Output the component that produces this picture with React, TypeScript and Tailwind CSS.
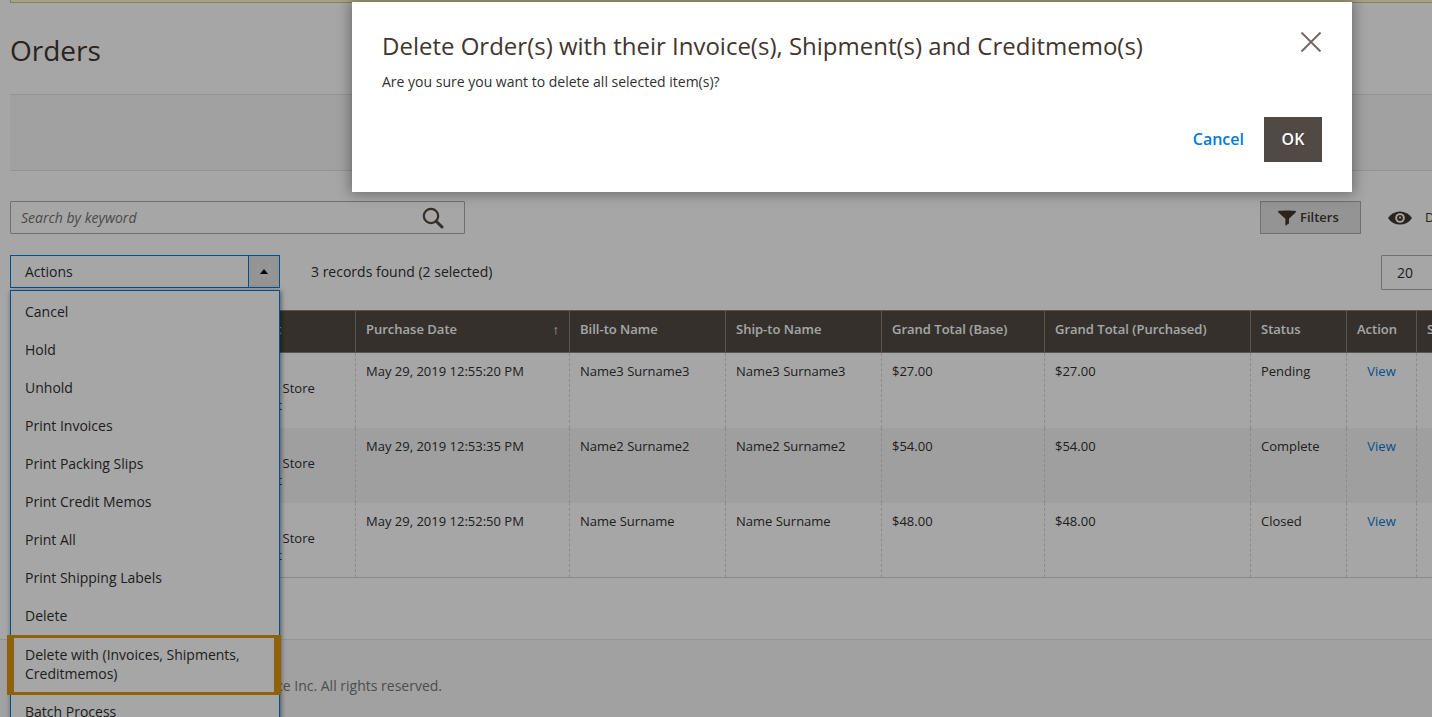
import React from "react";

const menuItems = [
  "Cancel",
  "Hold",
  "Unhold",
  "Print Invoices",
  "Print Packing Slips",
  "Print Credit Memos",
  "Print All",
  "Print Shipping Labels",
  "Delete",
  "Delete with (Invoices, Shipments, Creditmemos)",
  "Batch Process",
];

const highlighted = "Delete with (Invoices, Shipments, Creditmemos)";

const orders = [
  { id: "000000003", date: "May 29, 2019 12:55:20 PM", name: "Name3 Surname3", total: "$27.00", status: "Pending" },
  { id: "000000002", date: "May 29, 2019 12:53:35 PM", name: "Name2 Surname2", total: "$54.00", status: "Complete" },
  { id: "000000001", date: "May 29, 2019 12:52:50 PM", name: "Name Surname", total: "$48.00", status: "Closed" },
];

function SearchIcon() {
  return (
    <svg width="22" height="22" viewBox="0 0 22 22" fill="none" stroke="#514943" aria-hidden="true">
      <circle cx="9" cy="9" r="7.2" strokeWidth="2.2" />
      <path d="M14.2 14.2L20 20" strokeWidth="3" strokeLinecap="round" />
    </svg>
  );
}

function FunnelIcon() {
  return (
    <svg width="18" height="16" viewBox="0 0 18 16" fill="#41362f" aria-hidden="true">
      <path d="M0 1C5 0.3 13 0.3 18 1L17.6 2.4L11 8.8V13.4L7.4 15.8V8.8L0.4 2.4Z" />
    </svg>
  );
}

function EyeIcon() {
  return (
    <svg width="24" height="14" viewBox="0 0 24 14" aria-hidden="true">
      <path d="M0 7C3 2.6 7 0.4 12 0.4S21 2.6 24 7C21 11.4 17 13.6 12 13.6S3 11.4 0 7Z" fill="#41362f" />
      <circle cx="12" cy="7" r="4.8" fill="#fff" />
      <circle cx="12" cy="7" r="2.9" fill="#41362f" />
      <circle cx="12" cy="6.5" r="1.1" fill="#fff" />
    </svg>
  );
}

function ActionsMenu() {
  return (
    <div className="relative z-10 w-[270px] shrink-0">
      <button
        type="button"
        aria-expanded="true"
        aria-haspopup="menu"
        className="flex h-[33px] w-full items-stretch border border-[#007bdb] bg-white text-left"
      >
        <span className="flex flex-1 items-center pl-3.5">Actions</span>
        <span className="flex w-[31px] items-center justify-center border-l border-[#007bdb] bg-[#e3e3e3]">
          <svg width="8" height="5" viewBox="0 0 8 5" aria-hidden="true">
            <path d="M4 0L8 5H0Z" fill="#000" />
          </svg>
        </span>
      </button>
      <ul
        role="menu"
        className="absolute top-full left-0 mt-0.5 w-full border border-[#007bdb] bg-white pt-px shadow-[1px_1px_5px_rgba(0,0,0,0.5)]"
      >
        {menuItems.map((item) =>
          item === highlighted ? (
            <li key={item} role="none" className="mt-px -mr-0.5 -mb-[3px] -ml-1 border-x-[7px] border-y-[3px] border-[#db9711]">
              <button type="button" role="menuitem" className="block w-full pt-[7px] pr-6 pb-[9px] pl-[11px] text-left">
                {item}
              </button>
            </li>
          ) : (
            <li key={item} role="none">
              <button type="button" role="menuitem" className="flex h-[38px] w-full items-center px-3.5 text-left">
                {item}
              </button>
            </li>
          ),
        )}
      </ul>
    </div>
  );
}

const th = "border border-[#8a837f] px-2.5 pt-2.5 text-left align-top font-semibold whitespace-nowrap text-white";
const td = "border-x border-dashed border-[#d6d6d6] px-2.5 pt-2.5 align-top";

function OrdersTable() {
  return (
    <table className="w-[1506px] table-fixed border-collapse text-[13px] leading-[17px]">
      <colgroup>
        <col className="w-[54px]" />
        <col className="w-[112px]" />
        <col className="w-[179px]" />
        <col className="w-[214px]" />
        <col className="w-[156px]" />
        <col className="w-[156px]" />
        <col className="w-[163px]" />
        <col className="w-[206px]" />
        <col className="w-[96px]" />
        <col className="w-[70px]" />
        <col className="w-[100px]" />
      </colgroup>
      <thead>
        <tr className="h-[42px] bg-[#524b44]">
          <th className={th}>
            <input type="checkbox" aria-label="Select all orders" />
          </th>
          <th className={th}>ID</th>
          <th className={th}>Purchase Point</th>
          <th className={th}>
            <span className="flex justify-between">
              Purchase Date
              <span className="font-normal" aria-hidden="true">↑</span>
            </span>
          </th>
          <th className={th}>Bill-to Name</th>
          <th className={th}>Ship-to Name</th>
          <th className={th}>Grand Total (Base)</th>
          <th className={th}>Grand Total (Purchased)</th>
          <th className={th}>Status</th>
          <th className={th}>Action</th>
          <th className={th}>Signifyd</th>
        </tr>
      </thead>
      <tbody className="border-b border-[#d6d6d6]">
        {orders.map((order) => (
          <tr key={order.id} className="h-[75px] even:bg-[#f5f5f5]">
            <td className={td}>
              <input type="checkbox" aria-label={"Select order " + order.id} />
            </td>
            <td className={td}>{order.id}</td>
            <td className={td}>
              <div>Main Website</div>
              <div className="pl-2.5">Main Website Store</div>
              <div className="pl-[15px]">Store Default</div>
            </td>
            <td className={td}>{order.date}</td>
            <td className={td}>{order.name}</td>
            <td className={td}>{order.name}</td>
            <td className={td}>{order.total}</td>
            <td className={td}>{order.total}</td>
            <td className={td}>{order.status}</td>
            <td className={td + " text-center"}>
              <a href="#view" className="text-[#007bdb]">View</a>
            </td>
            <td className={td} />
          </tr>
        ))}
      </tbody>
    </table>
  );
}

function ConfirmDialog() {
  return (
    <div className="absolute inset-0 z-20 flex items-start justify-end bg-black/35 pt-0.5 pr-20">
      <section
        role="dialog"
        aria-modal="true"
        aria-labelledby="confirm-title"
        className="w-[1000px] bg-white px-[30px] pb-[30px] shadow-[0_0_12px_2px_rgba(0,0,0,0.35)]"
      >
        <header className="flex items-start justify-between pt-7">
          <h2 id="confirm-title" className="text-2xl text-[#41362f]">
            Delete Order(s) with their Invoice(s), Shipment(s) and Creditmemo(s)
          </h2>
          <button type="button" aria-label="Close" className="pt-0.5">
            <svg width="22" height="20" viewBox="0 0 22 20" fill="none" stroke="#736963" strokeWidth="2" aria-hidden="true">
              <path d="M1.5 0.5L20.5 19.5M20.5 0.5L1.5 19.5" />
            </svg>
          </button>
        </header>
        <p className="mt-2.5">Are you sure you want to delete all selected item(s)?</p>
        <footer className="mt-[26px] flex justify-end gap-0.5 text-base font-semibold">
          <button type="button" className="h-[45px] px-[18px] pb-0.5 text-[#007bdb]">Cancel</button>
          <button
            type="button"
            className="h-[45px] w-[58px] bg-[#514943] pb-0.5 text-white [text-shadow:1px_1px_0_rgba(0,0,0,0.25)]"
          >
            OK
          </button>
        </footer>
      </section>
    </div>
  );
}

export default function App() {
  return (
    <div className="relative flex h-screen flex-col overflow-hidden bg-white font-['Open_Sans',sans-serif] text-sm leading-[19px] text-[#303030]">
      <div className="ml-2.5 h-[3px] shrink-0 border-b border-l border-[#c4c4c4] bg-[#fdfdbe]" />
      <main className="flex h-[636px] shrink-0 flex-col pl-2.5">
        <h1 className="pt-[27px] text-[28px] leading-10 text-[#41362f]">Orders</h1>
        <div className="mt-6 h-[77px] shrink-0 border-y border-[#e3e3e3] bg-[#f8f8f8]" />

        <div className="mt-[30px] flex justify-between overflow-hidden">
          <div className="flex h-[33px] w-[455px] items-center rounded-[1px] border border-[#adadad] bg-white pr-5">
            <input
              type="text"
              aria-label="Search by keyword"
              placeholder="Search by keyword"
              className="h-full flex-1 px-2.5 outline-none placeholder:text-[#737373] placeholder:italic"
            />
            <button type="button" aria-label="Search">
              <SearchIcon />
            </button>
          </div>
          <div className="flex w-[172px] items-center text-[13px]">
            <button
              type="button"
              className="flex h-[33px] w-[101px] shrink-0 items-center gap-1 border border-[#adadad] bg-[#e3e3e3] pl-[17px] font-semibold text-[#41362f]"
            >
              <FunnelIcon />
              Filters
            </button>
            <button type="button" className="ml-[27px] flex shrink-0 items-center gap-[13px] whitespace-nowrap text-[#41362f]">
              <EyeIcon />
              Default View
            </button>
          </div>
        </div>

        <div className="mt-[21px] flex h-[35px] items-start">
          <ActionsMenu />
          <p className="flex h-[33px] items-center pl-[31px]">3 records found (2 selected)</p>
          <div className="ml-auto w-[51px] overflow-hidden">
            <input
              type="text"
              aria-label="Records per page"
              defaultValue="20"
              className="h-[35px] w-[88px] rounded-[1px] border border-[#adadad] bg-white px-[15px]"
            />
          </div>
        </div>

        <div className="mt-5 overflow-hidden">
          <OrdersTable />
        </div>
      </main>
      <footer className="flex-1 border-t border-[#e3e3e3] bg-[#f8f8f8] pt-9 pl-10 text-[#777]">
        Copyright © 2019 Magento Commerce Inc. All rights reserved.
      </footer>
      <ConfirmDialog />
    </div>
  );
}
